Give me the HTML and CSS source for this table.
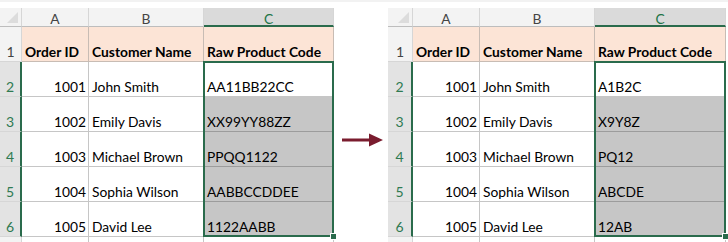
FILE: index.html
```html
<!DOCTYPE html>
<html>
<head>
<meta charset="utf-8">
<link rel="stylesheet" href="styles.css">
</head>
<body>
<div class="page">
  <div class="sheet left">
    <div class="corner"><span class="tri"></span></div>
    <div class="ch">A</div>
    <div class="ch">B</div>
    <div class="ch on">C</div>

    <div class="rh">1</div>
    <div class="c hd">Order ID</div>
    <div class="c hd">Customer Name</div>
    <div class="c hd">Raw Product Code</div>

    <div class="rh on">2</div>
    <div class="c num">1001</div>
    <div class="c">John Smith</div>
    <div class="c act">AA11BB22CC</div>

    <div class="rh on">3</div>
    <div class="c num">1002</div>
    <div class="c">Emily Davis</div>
    <div class="c gr">XX99YY88ZZ</div>

    <div class="rh on">4</div>
    <div class="c num">1003</div>
    <div class="c">Michael Brown</div>
    <div class="c gr">PPQQ1122</div>

    <div class="rh on">5</div>
    <div class="c num">1004</div>
    <div class="c">Sophia Wilson</div>
    <div class="c gr">AABBCCDDEE</div>

    <div class="rh on">6</div>
    <div class="c num">1005</div>
    <div class="c">David Lee</div>
    <div class="c gr">1122AABB</div>

    <div class="rh"></div>
    <div class="c"></div>
    <div class="c"></div>
    <div class="c"></div>

    <div class="sel"><span class="handle"></span></div>
  </div>

  <div class="arrow">
    <svg width="42" height="16" viewBox="0 0 42 16">
      <path d="M0 6.5 H27 V1.5 L41 8 L27 14.5 V9.5 H0 Z" fill="#7a1c2e"/>
    </svg>
  </div>

  <div class="sheet right">
    <div class="corner"><span class="tri"></span></div>
    <div class="ch">A</div>
    <div class="ch">B</div>
    <div class="ch on">C</div>

    <div class="rh">1</div>
    <div class="c hd">Order ID</div>
    <div class="c hd">Customer Name</div>
    <div class="c hd">Raw Product Code</div>

    <div class="rh on">2</div>
    <div class="c num">1001</div>
    <div class="c">John Smith</div>
    <div class="c act">A1B2C</div>

    <div class="rh on">3</div>
    <div class="c num">1002</div>
    <div class="c">Emily Davis</div>
    <div class="c gr">X9Y8Z</div>

    <div class="rh on">4</div>
    <div class="c num">1003</div>
    <div class="c">Michael Brown</div>
    <div class="c gr">PQ12</div>

    <div class="rh on">5</div>
    <div class="c num">1004</div>
    <div class="c">Sophia Wilson</div>
    <div class="c gr">ABCDE</div>

    <div class="rh on">6</div>
    <div class="c num">1005</div>
    <div class="c">David Lee</div>
    <div class="c gr">12AB</div>

    <div class="rh"></div>
    <div class="c"></div>
    <div class="c"></div>
    <div class="c"></div>

    <div class="sel"><span class="handle"></span></div>
  </div>
</div>
</body>
</html>
```

FILE: styles.css
```css
* { box-sizing: border-box; }
html, body { margin: 0; padding: 0; background: #fff; }
body { width: 728px; height: 242px; overflow: hidden; font-family: "Lato", "Liberation Sans", sans-serif; }

.page {
  display: flex;
  align-items: flex-start;
  padding-top: 6px;
  height: 242px;
  border-top: 2px solid #f2f2f2;
}

.sheet {
  display: grid;
  grid-template-rows: 19px 35px 35px 35px 35px 35px 35px 12px;
  position: relative;
  font-size: 13.8px;
  color: #000;
  flex: none;
}
.left { grid-template-columns: 22px 67px 115px 130px; width: 334px; }
.right { grid-template-columns: 25px 67px 115px 131px; width: 338px; }

.corner {
  background: #f3f3f3;
  border-right: 1px solid #d6d6d6;
  border-bottom: 1px solid #bdbdbd;
  position: relative;
}
.tri {
  position: absolute;
  right: 3px;
  bottom: 3px;
  width: 0; height: 0;
  border-left: 11px solid transparent;
  border-bottom: 11px solid #dcdcdc;
}

.ch {
  background: #f3f3f3;
  border-right: 1px solid #d6d6d6;
  border-bottom: 1px solid #bdbdbd;
  color: #444;
  font-size: 13.8px;
  display: flex;
  align-items: center;
  justify-content: center;
  padding-top: 3px;
}
.ch.on {
  background: #dadada;
  color: #217346;
  border-bottom: 2px solid #2a6b4c;
}

.rh {
  background: #f3f3f3;
  border-right: 1px solid #d6d6d6;
  border-bottom: 1px solid #d6d6d6;
  color: #444;
  font-size: 14px;
  display: flex;
  align-items: flex-end;
  justify-content: center;
  padding-bottom: 1px;
}
.rh.on {
  background: #e3e3e3;
  color: #2f7a52;
  border-right: 2px solid #2a6b4c;
}

.c {
  border-right: 1px solid #c6c6c6;
  border-bottom: 1px solid #c6c6c6;
  display: flex;
  align-items: flex-end;
  padding: 0 2px 1px 3px;
  white-space: nowrap;
  overflow: hidden;
}
.c.hd { background: #fce4d6; font-weight: bold; font-size: 13.8px; border-color: #c8bcb4; }
.c.num { justify-content: flex-end; }
.c.gr { background: #c6c6c6; border-bottom-color: #9c9c9c; border-right-color: #9c9c9c; }
.c.act { background: #fff; }

.sel {
  position: absolute;
  grid-column: 4;
  grid-row: 3 / 8;
  top: -1px;
  left: -1px;
  right: 0;
  bottom: 0;
  border: 2px solid #2a6b4c;
  pointer-events: none;
}
.handle {
  position: absolute;
  right: -5px;
  bottom: -5px;
  width: 7px;
  height: 7px;
  background: #2a6b4c;
  border: 1px solid #fff;
}

.arrow {
  width: 54px;
  height: 229px;
  flex: none;
  display: flex;
  align-items: center;
  padding-left: 8px;
  padding-top: 34px;
}
```
